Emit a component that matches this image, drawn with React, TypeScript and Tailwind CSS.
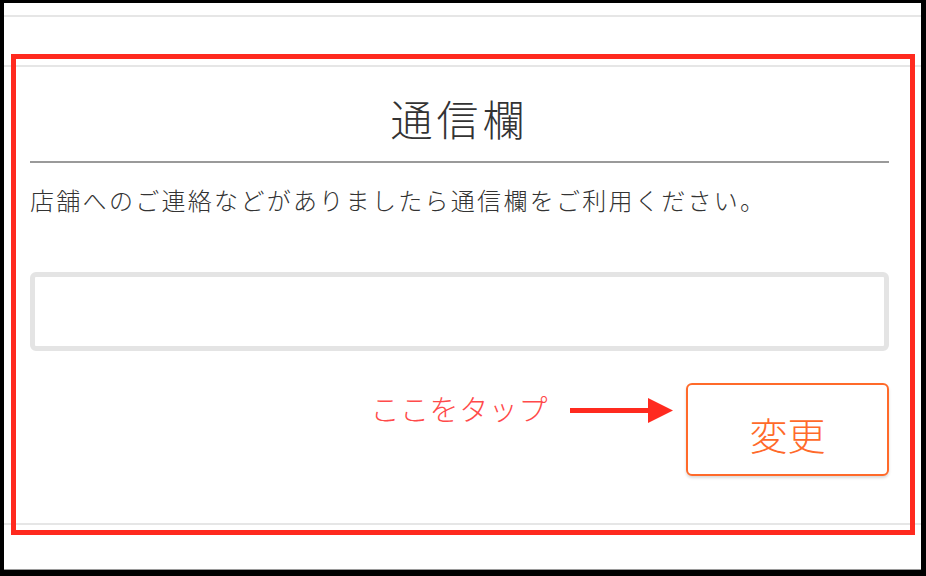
import React from 'react'

const jp = { fontFamily: '"Noto Sans CJK JP", "Noto Sans", sans-serif' }

function Arrow() {
  return (
    <svg width="104" height="26" viewBox="0 0 104 26" className="mt-[15px] shrink-0">
      <rect x="0" y="10" width="80" height="5" fill="#ff2a1f" />
      <polygon points="78,0 103,12.5 78,25" fill="#ff2a1f" />
    </svg>
  )
}

export default function App() {
  return (
    <div className="w-[926px] h-[576px] bg-black pt-[3px] pl-[4px] pr-[5px] pb-[6px]" style={jp}>
      <div className="relative w-full h-full bg-white overflow-hidden border-b border-[#9a9a9a]">
        {/* previous block ends here */}
        <div className="h-[14px] border-b-2 border-[#e6e6e6]" />

        <section className="mt-[48px] border-t-2 border-b-2 border-[#e6e6e6] pl-[26px] pr-[32px] h-[460px]">
          <h2 className="pt-[30px] pb-[22px] text-center text-[42px] leading-[42px] tracking-[4px] text-[#333] font-light">
            通信欄
          </h2>
          <div className="h-[2px] bg-[#9a9a9a]" />
          <p className="mt-[22px] text-[24px] leading-[30px] tracking-[2.3px] text-[#333] font-light">
            店舗へのご連絡などがありましたら通信欄をご利用ください。
          </p>
          <div className="mt-[57px] h-[79px] rounded-md border-[5px] border-[#e4e4e4] bg-white" />
          <div className="mt-[32px] flex items-start justify-end">
            <span className="mt-[5px] text-[29px] leading-[40px] tracking-[0.6px] text-[#ff4a4a] font-light">
              ここをタップ
            </span>
            <div className="ml-[22px] mr-[12px]">
              <Arrow />
            </div>
            <button className="w-[203px] h-[93px] pt-[8px] rounded-md border-2 border-[#ff6a2a] bg-white text-[#ff6a2a] text-[38px] leading-none font-light shadow-[0_2px_3px_rgba(0,0,0,0.15)]">
              変更
            </button>
          </div>
        </section>

        {/* annotation frame */}
        <div className="absolute left-[7px] top-[51px] w-[904px] h-[481px] border-[5px] border-[#ff2a1f]" />
      </div>
    </div>
  )
}
